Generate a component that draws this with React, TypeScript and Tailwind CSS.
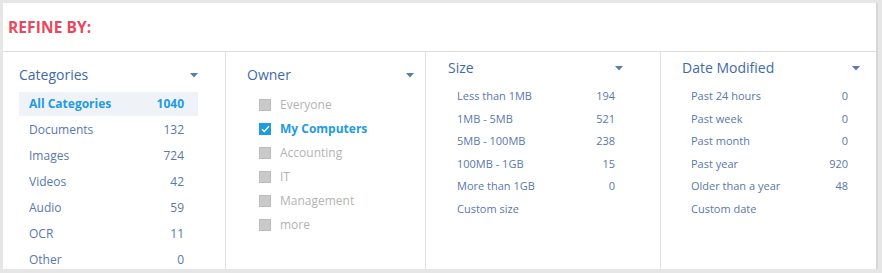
const categories = [
  { label: 'All Categories', count: 1040, active: true },
  { label: 'Documents', count: 132 },
  { label: 'Images', count: 724 },
  { label: 'Videos', count: 42 },
  { label: 'Audio', count: 59 },
  { label: 'OCR', count: 11 },
  { label: 'Other', count: 0 },
];

const owners = [
  { label: 'Everyone' },
  { label: 'My Computers', checked: true },
  { label: 'Accounting' },
  { label: 'IT' },
  { label: 'Management' },
  { label: 'more' },
];

const sizes: [string, number | null][] = [
  ['Less than 1MB', 194],
  ['1MB - 5MB', 521],
  ['5MB - 100MB', 238],
  ['100MB - 1GB', 15],
  ['More than 1GB', 0],
  ['Custom size', null],
];

const dates: [string, number | null][] = [
  ['Past 24 hours', 0],
  ['Past week', 0],
  ['Past month', 0],
  ['Past year', 920],
  ['Older than a year', 48],
  ['Custom date', null],
];

function Caret() {
  return (
    <svg width="8" height="5" viewBox="0 0 8 5" className="shrink-0">
      <path d="M0 0h8L4 4.5z" fill="#5b7cab" />
    </svg>
  );
}

function Heading({ title }: { title: string }) {
  return (
    <div className="flex h-[20px] items-center justify-between">
      <span className="text-[14px] leading-[20px] text-[#3f6aa9]">{title}</span>
      <Caret />
    </div>
  );
}

function Check({ checked }: { checked?: boolean }) {
  if (checked) {
    return (
      <span className="flex h-[12px] w-[12px] items-center justify-center bg-[#1d9be6]">
        <svg width="9" height="8" viewBox="0 0 9 8">
          <path d="M1 4.2l2.3 2.3L8 1.2" fill="none" stroke="#fff" strokeWidth="1.4" />
        </svg>
      </span>
    );
  }
  return <span className="h-[12px] w-[12px] border border-[#bdbdbd] bg-[#cacaca]" />;
}

function CountList({ rows }: { rows: [string, number | null][] }) {
  return (
    <div className="flex flex-col">
      {rows.map(([label, n]) => (
        <div key={label} className="flex h-[22.6px] items-center justify-between text-[11px] text-[#5a78aa]">
          <span>{label}</span>
          <span>{n}</span>
        </div>
      ))}
    </div>
  );
}

export default function App() {
  return (
    <div
      className="h-[273px] w-[882px] bg-[#e6e6e6] pb-[4px] pl-[3px] pr-[4px] pt-[3px]"
      style={{ fontFamily: '"Open Sans", sans-serif' }}
    >
      <div className="flex h-full flex-col border-r-2 border-[#d6d6d6] bg-white">
        <div className="flex h-[49px] shrink-0 items-center border-b border-[#dedede] pl-[5px] pt-[2px]">
          <span className="text-[15.5px] font-bold tracking-[0.1px] text-[#e8485e]">REFINE BY:</span>
        </div>
        <div className="flex min-h-0 flex-1 overflow-hidden">
          {/* categories */}
          <div className="w-[223px] border-r border-[#e2e2e2] pl-[16px] pr-[27px] pt-[13px]">
            <Heading title="Categories" />
            <div className="mt-[7px] flex flex-col gap-[2px]">
              {categories.map((c) => (
                <div
                  key={c.label}
                  className={
                    c.active
                      ? 'flex h-[24px] items-center justify-between bg-[#eff3f7] pl-[10px] pr-[14px] text-[12px] font-bold text-[#229be3]'
                      : 'flex h-[24px] items-center justify-between pl-[10px] pr-[14px] text-[12px] text-[#5a78aa]'
                  }
                >
                  <span>{c.label}</span>
                  <span>{c.count}</span>
                </div>
              ))}
            </div>
          </div>

          {/* owner */}
          <div className="w-[200px] border-r border-[#e2e2e2] pl-[21px] pr-[11px] pt-[13px]">
            <Heading title="Owner" />
            <div className="mt-[8px] flex flex-col pl-[12px]">
              {owners.map((o) => (
                <div key={o.label} className="flex h-[24px] items-center gap-[9px]">
                  <Check checked={o.checked} />
                  <span
                    className={
                      o.checked
                        ? 'text-[12px] font-bold text-[#229be3]'
                        : 'text-[12px] text-[#b3b3b3]'
                    }
                  >
                    {o.label}
                  </span>
                </div>
              ))}
            </div>
          </div>

          {/* size */}
          <div className="w-[235px] border-r border-[#e2e2e2] pl-[22px] pr-[37px] pt-[6px]">
            <Heading title="Size" />
            <div className="mt-[7px] pl-[9px] pr-[8px]">
              <CountList rows={sizes} />
            </div>
          </div>

          {/* date */}
          <div className="flex-1 pl-[21px] pr-[16px] pt-[6px]">
            <Heading title="Date Modified" />
            <div className="mt-[7px] pl-[9px] pr-[12px]">
              <CountList rows={dates} />
            </div>
          </div>
        </div>
      </div>
    </div>
  );
}
